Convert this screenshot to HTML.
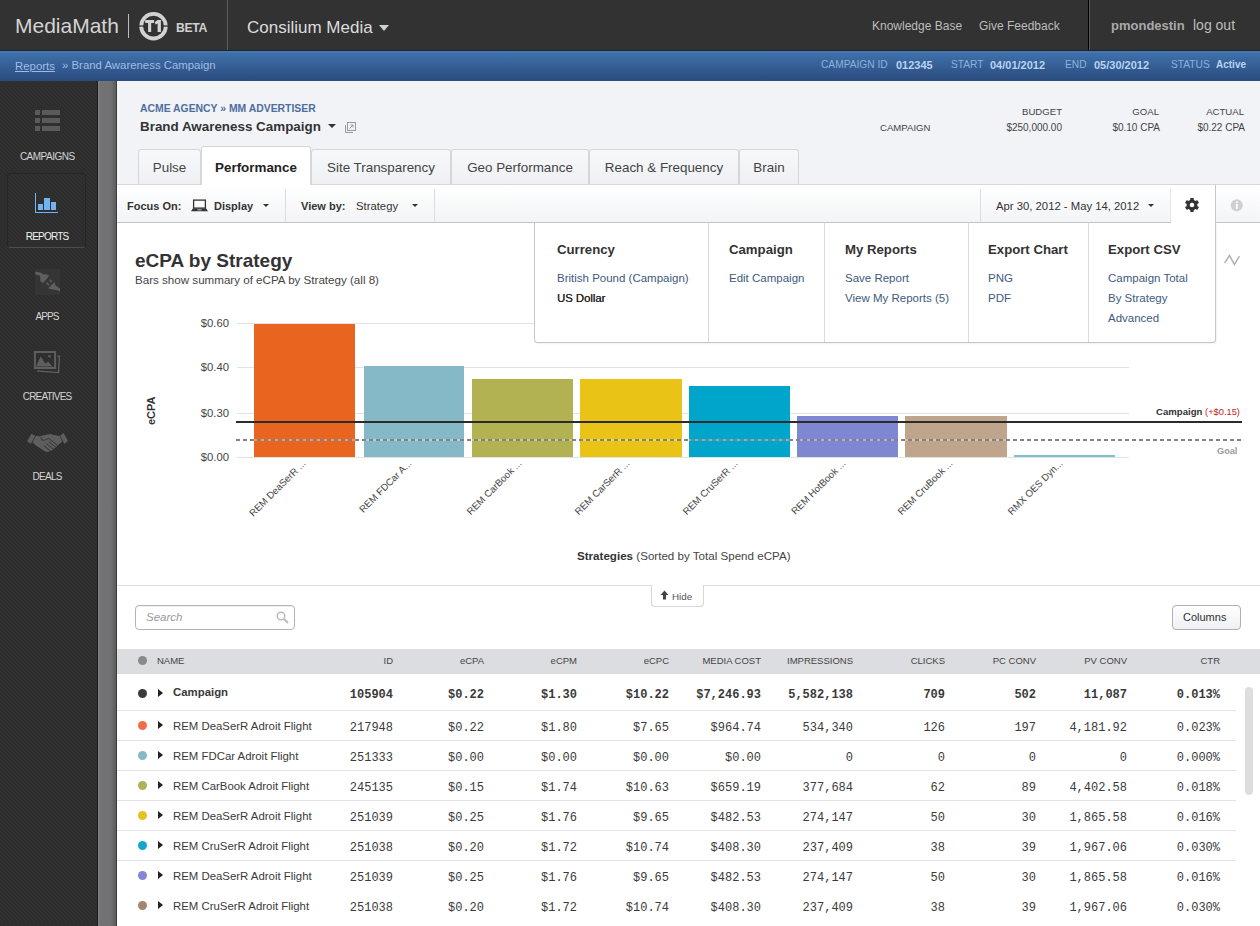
<!DOCTYPE html>
<html><head><meta charset="utf-8">
<style>
*{margin:0;padding:0;box-sizing:border-box}
html,body{width:1260px;height:926px;overflow:hidden;background:#fff;font-family:"Liberation Sans",sans-serif;color:#333}
.a{position:absolute;white-space:nowrap;line-height:1}
.r{text-align:right}
#top{position:absolute;left:0;top:0;width:1260px;height:51px;background:#323232;border-bottom:1px solid #262420}
#blue{position:absolute;left:0;top:51px;width:1260px;height:30px;background:linear-gradient(#4479b9 0 1px,#3f70ab 2px,#2a4b7d)}
#side{position:absolute;left:0;top:81px;width:98px;height:845px;background-color:#303030;background-image:repeating-linear-gradient(45deg,rgba(0,0,0,.13) 0 1px,transparent 1px 2.83px);border-right:1px solid #1c1c1c}
#strip{position:absolute;left:98px;top:81px;width:19px;height:845px;background:linear-gradient(90deg,#7e7e7e 0 1px,#727274 2px,#717173 13px,#5c5c5c 18px,#3c3c3c 18px)}
#hdr{position:absolute;left:117px;top:81px;width:1143px;height:103px;background:#f2f3f7}
.tab{position:absolute;top:149px;height:35px;border:1px solid #d5d6da;border-bottom:none;border-radius:3px 3px 0 0;background:linear-gradient(#f7f8fa,#eef0f3);font-size:13.4px;color:#444;text-align:center;line-height:36px}
.tab.on{top:146px;height:39px;background:#fff;color:#222;font-weight:bold;line-height:42px;z-index:3}
#tb{position:absolute;left:117px;top:184px;width:1143px;height:39px;border-top:1px solid #d5d6da;border-bottom:1px solid #c4c5c9;background:linear-gradient(#fff,#f3f4f7)}
.sep{position:absolute;width:1px;background:#dcdde1}
.lbl{position:absolute;left:0;width:95px;text-align:center;font-size:10px;color:#d4d4d4;line-height:1}
.meta-l{position:absolute;font-size:10.2px;color:#8eb1da;line-height:1;white-space:nowrap}
.meta-v{position:absolute;font-size:11px;font-weight:bold;color:#b9d3f1;line-height:1;white-space:nowrap}
</style></head><body>
<!-- TOP BAR -->
<div id="top">
  <div class="a" style="left:15px;top:15px;font-size:21px;color:#d4d4d4">MediaMath</div>
  <div class="a" style="left:128px;top:14px;width:1px;height:24px;background:#bdbdbd"></div>
  <svg class="a" style="left:138px;top:11px" width="31" height="31" viewBox="0 0 31 31">
    <circle cx="15.5" cy="15.2" r="12.3" fill="none" stroke="#d2d2d2" stroke-width="3.8"/>
    <rect x="0" y="14.4" width="31" height="1.3" fill="#323232"/>
    <path d="M7.2 9 L16.1 9 L16.1 12 L13.2 12 L13.2 21 L10.1 21 L10.1 12 L7.2 12 Z" fill="#d2d2d2"/>
    <path d="M19.5 9 L22.9 9 L22.9 21 L19.6 21 L19.6 12.6 L17.3 13.6 L16.9 11 Z" fill="#d2d2d2"/>
  </svg>
  <div class="a" style="left:176px;top:21.5px;font-size:12.2px;font-weight:bold;color:#d0d0d0;letter-spacing:-0.35px">BETA</div>
  <div class="a" style="left:227px;top:0;width:1px;height:50px;background:#5c5c5c"></div>
  <div class="a" style="left:247px;top:19px;font-size:17px;color:#dcdcdc">Consilium Media</div>
  <div class="a" style="left:378.5px;top:25.2px;width:0;height:0;border-left:5.5px solid transparent;border-right:5.5px solid transparent;border-top:6px solid #d0d0d0"></div>
  <div class="a" style="left:872px;top:20px;font-size:12px;color:#bdbdbd">Knowledge Base</div>
  <div class="a" style="left:979px;top:20px;font-size:12px;color:#bdbdbd">Give Feedback</div>
  <div class="a" style="left:1088px;top:0;width:1px;height:50px;background:#000"></div><div class="a" style="left:1089px;top:0;width:1px;height:50px;background:#5a5a5a"></div>
  <div class="a" style="left:1111px;top:19px;font-size:13px;font-weight:bold;color:#aaaaaa">pmondestin</div>
  <div class="a" style="left:1193px;top:18px;font-size:14px;color:#bdbdbd">log out</div>
</div>
<!-- BLUE BAR -->
<div id="blue">
  <div class="a" style="left:15px;top:9px;font-size:11.4px;color:#9fbde3;text-decoration:underline;line-height:1.1">Reports</div>
  <div class="a" style="left:62px;top:9px;font-size:11.4px;color:#9fbde3">» Brand Awareness Campaign</div>
  <div class="meta-l" style="left:821px;top:9px">CAMPAIGN ID</div>
  <div class="meta-v" style="left:896px;top:9px">012345</div>
  <div class="meta-l" style="left:951px;top:9px">START</div>
  <div class="meta-v" style="left:990px;top:9px">04/01/2012</div>
  <div class="meta-l" style="left:1065px;top:9px">END</div>
  <div class="meta-v" style="left:1094px;top:9px">05/30/2012</div>
  <div class="meta-l" style="left:1171px;top:9px">STATUS</div>
  <div class="meta-v" style="left:1216px;top:9px;font-size:10px">Active</div>
</div>
<!-- SIDEBAR -->
<div id="side">
  <!-- campaigns icon -->
  <div class="a" style="left:35px;top:29px;width:5px;height:5px;background:#5a5a5a"></div>
  <div class="a" style="left:42px;top:29px;width:18px;height:5px;background:#5a5a5a"></div>
  <div class="a" style="left:35px;top:37px;width:5px;height:5px;background:#5a5a5a"></div>
  <div class="a" style="left:42px;top:37px;width:18px;height:5px;background:#5a5a5a"></div>
  <div class="a" style="left:35px;top:45px;width:5px;height:5px;background:#5a5a5a"></div>
  <div class="a" style="left:42px;top:45px;width:18px;height:5px;background:#5a5a5a"></div>
  <div class="lbl" style="top:70.6px;letter-spacing:-0.51px;text-indent:-0.5px">CAMPAIGNS</div>
  <!-- reports box -->
  <div class="a" style="left:7px;top:92px;width:79px;height:75px;border:1px solid #262626;border-bottom:1px solid #4c4c4c;border-radius:4px"></div>
  <div class="a" style="left:35px;top:112px;width:1.2px;height:20px;background:#72b4f2"></div>
  <div class="a" style="left:35px;top:131px;width:23px;height:1.2px;background:#72b4f2"></div>
  <div class="a" style="left:38px;top:123px;width:5px;height:6px;background:#72b4f2"></div>
  <div class="a" style="left:44px;top:117px;width:6px;height:12px;background:#72b4f2"></div>
  <div class="a" style="left:51px;top:121px;width:5px;height:8px;background:#72b4f2"></div>
  <div class="lbl" style="top:150.7px;color:#f2f2f2;letter-spacing:-0.77px;text-indent:-0.77px">REPORTS</div>
  <!-- apps icon -->
  <div class="a" style="left:35px;top:188px;width:25px;height:26px;background:#353535;border-radius:1px"></div>
  <svg class="a" style="left:35px;top:188px" width="26" height="26" viewBox="0 0 26 26">
    <path d="M0.3 2.7 C3.5 2.7 6.5 3.6 8.6 5.4 L6.2 7.6 C4.6 6.2 2.6 5.4 0.3 5.4 Z" fill="#5f5f5f"/>
    <path d="M5.1 6.5 L10.8 4.9 L14.3 6.7 L7.8 14.3 L5.4 11.9 Z" fill="#5f5f5f"/>
    <path d="M14.8 10.8 L16.7 13.2 M11.6 13.8 L14 16.2" stroke="#5f5f5f" stroke-width="1.7"/>
    <path d="M13 19.2 L19.7 13 L20.2 15.9 C22 17.6 23.5 18.6 25.1 19.4 L25.1 22.4 C23.6 21.9 22.3 21.5 21 21.1 L15.7 20 Z" fill="#5f5f5f"/>
  </svg>
  <div class="lbl" style="top:230.6px;letter-spacing:-0.9px;text-indent:-0.9px">APPS</div>
  <!-- creatives icon -->
  <svg class="a" style="left:33px;top:269px" width="29" height="25" viewBox="0 0 29 25">
    <rect x="1.9" y="2" width="20.2" height="16" fill="none" stroke="#5e5e5e" stroke-width="2"/>
    <path d="M3 16.6 L7.6 6.4 L12.3 13.4 L15.3 11.8 L19.5 16.6 Z" fill="#5e5e5e"/>
    <circle cx="16.4" cy="6.3" r="1.3" fill="#5e5e5e"/>
    <path d="M24.3 6.1 L26.4 6.2 L25.5 22.6 L4.1 21" fill="none" stroke="#5e5e5e" stroke-width="1.4"/>
  </svg>
  <div class="lbl" style="top:310.6px;letter-spacing:-0.8px;text-indent:-0.8px">CREATIVES</div>
  <!-- deals icon -->
  <svg class="a" style="left:22px;top:339px" width="50" height="36" viewBox="0 0 50 36">
    <path d="M5.1 21.3 L9.4 13.8 L13.2 15.7 L8.9 23.8 Z" fill="#5e5e5e"/>
    <path d="M38.1 15.7 L41.6 13 L45.9 21.1 L42.4 23.8 Z" fill="#5e5e5e"/>
    <path d="M10.5 22.4 L13.8 15.9 L17.8 16.2 L20.8 15.4 L28.1 14.1 L32.4 15.1 L37.8 15.9 L40.2 21.6 L35.6 25.4 L30.2 30.2 L25.4 31.9 L22.7 31.3 L17.8 28.1 L14.6 25.9 Z" fill="#5e5e5e"/>
    <path d="M19.2 17 C18.6 19.3 20.3 20.8 22.7 20.2 L26.5 18.4 L35.4 25.2 M24.3 23.6 L31.6 29.4 M21.8 25.6 L28.6 31 M26.8 21.8 L33.8 27.2" fill="none" stroke="#303030" stroke-width="0.9"/>
  </svg>
</div>
<div class="lbl" style="top:471.6px;position:absolute;letter-spacing:-0.75px;text-indent:-0.75px">DEALS</div>
<div id="strip"></div>
<!-- HEADER -->
<div id="hdr"></div>
<div class="a" style="left:140px;top:104px;font-size:10.4px;font-weight:bold;color:#4e6e9e">ACME AGENCY » MM ADVERTISER</div>
<div class="a" style="left:140px;top:120px;font-size:13.4px;font-weight:bold;color:#333">Brand Awareness Campaign</div>
<div class="a" style="left:328px;top:124px;width:0;height:0;border-left:4px solid transparent;border-right:4px solid transparent;border-top:4.5px solid #333"></div>
<svg class="a" style="left:344px;top:121px" width="13" height="13" viewBox="0 0 13 13">
  <rect x="3.5" y="1.5" width="8" height="8" fill="none" stroke="#9a9a9a" stroke-width="1"/>
  <path d="M1.5 4 L1.5 11.5 L9 11.5" fill="none" stroke="#9a9a9a" stroke-width="1"/>
  <path d="M5.5 7.5 L9 4 M6.5 4 L9 4 L9 6.5" fill="none" stroke="#9a9a9a" stroke-width="1"/>
</svg>
<div class="a r" style="left:980px;top:107px;width:82px;font-size:9.6px;color:#444">BUDGET</div>
<div class="a" style="left:880px;top:123px;font-size:9.6px;color:#444">CAMPAIGN</div>
<div class="a r" style="left:980px;top:122.7px;width:82px;font-size:10px;color:#444">$250,000.00</div>
<div class="a r" style="left:1080px;top:107px;width:79px;font-size:9.6px;color:#444">GOAL</div>
<div class="a r" style="left:1080px;top:122.7px;width:80px;font-size:10px;color:#444">$0.10 CPA</div>
<div class="a r" style="left:1160px;top:107px;width:84px;font-size:9.6px;color:#444">ACTUAL</div>
<div class="a r" style="left:1160px;top:122.7px;width:85px;font-size:10px;color:#444">$0.22 CPA</div>
<!-- TABS -->
<div class="tab" style="left:138px;width:63px">Pulse</div>
<div class="tab on" style="left:201px;width:110px">Performance</div>
<div class="tab" style="left:311px;width:140px">Site Transparency</div>
<div class="tab" style="left:451px;width:138px">Geo Performance</div>
<div class="tab" style="left:589px;width:150px">Reach &amp; Frequency</div>
<div class="tab" style="left:739px;width:60px">Brain</div>
<!-- TOOLBAR -->
<div id="tb"></div>

<div class="a" style="left:127px;top:201px;font-size:11px;font-weight:bold;color:#333">Focus On:</div>
<svg class="a" style="left:191px;top:199px" width="17" height="13" viewBox="0 0 17 13">
  <rect x="2.6" y="1.1" width="11.8" height="8" fill="none" stroke="#333" stroke-width="1.3"/>
  <path d="M0 12.2 L1.8 9.6 L15.2 9.6 L17 12.2 Z" fill="#333"/>
  <rect x="6.5" y="10.4" width="4" height="0.9" fill="#ddd"/>
</svg>
<div class="a" style="left:214px;top:201px;font-size:11px;font-weight:bold;color:#333">Display</div>
<div class="a" style="left:263px;top:204px;width:0;height:0;border-left:3.5px solid transparent;border-right:3.5px solid transparent;border-top:3.5px solid #333"></div>
<div class="sep" style="left:285px;top:189px;height:33px"></div>
<div class="a" style="left:301px;top:201px;font-size:11px;font-weight:bold;color:#333">View by:</div>
<div class="a" style="left:356px;top:201px;font-size:11.3px;color:#333">Strategy</div>
<div class="a" style="left:412px;top:204px;width:0;height:0;border-left:3.5px solid transparent;border-right:3.5px solid transparent;border-top:3.5px solid #333"></div>
<div class="sep" style="left:434px;top:189px;height:33px"></div>
<div class="sep" style="left:980px;top:189px;height:33px"></div>
<div class="a" style="left:996px;top:201px;font-size:11.3px;color:#333">Apr 30, 2012 - May 14, 2012</div>
<div class="a" style="left:1148px;top:204px;width:0;height:0;border-left:3.5px solid transparent;border-right:3.5px solid transparent;border-top:3.5px solid #333"></div>
<div class="sep" style="left:1170px;top:189px;height:33px;background:#e4e5e8"></div>
<div class="a" style="left:1171px;top:185px;width:45px;height:38px;background:#fff;z-index:2;border-right:1px solid #c6c6c6"></div>
<svg class="a" style="left:1184px;top:197px;z-index:3" width="16" height="16" viewBox="0 0 16 16">
  <g fill="#333">
    <circle cx="8" cy="8" r="5.4"/>
    <rect x="6.3" y="0.9" width="3.4" height="3.4" rx="0.5"/>
    <rect x="6.3" y="0.9" width="3.4" height="3.4" rx="0.5" transform="rotate(60 8 8)"/>
    <rect x="6.3" y="0.9" width="3.4" height="3.4" rx="0.5" transform="rotate(120 8 8)"/>
    <rect x="6.3" y="0.9" width="3.4" height="3.4" rx="0.5" transform="rotate(180 8 8)"/>
    <rect x="6.3" y="0.9" width="3.4" height="3.4" rx="0.5" transform="rotate(240 8 8)"/>
    <rect x="6.3" y="0.9" width="3.4" height="3.4" rx="0.5" transform="rotate(300 8 8)"/>
  </g>
  <circle cx="8" cy="8" r="2.3" fill="#fff"/>
</svg>
<svg class="a" style="left:1230px;top:199px" width="14" height="13" viewBox="0 0 14 13">
  <circle cx="6.8" cy="6.3" r="6" fill="#cfcfcf"/>
  <rect x="5.9" y="5" width="1.8" height="5" fill="#fff"/>
  <circle cx="6.8" cy="3.3" r="1" fill="#fff"/>
</svg>
<!-- CHART -->
<div class="a" style="left:135px;top:251px;font-size:19px;font-weight:bold;color:#333">eCPA by Strategy</div>
<div class="a" style="left:135px;top:274px;font-size:11.6px;color:#444">Bars show summary of eCPA by Strategy (all 8)</div>
<div class="a" style="left:237px;top:323px;width:892px;height:1px;background:#e2e2e2"></div>
<div class="a r" style="left:180px;top:317.5px;width:49px;font-size:11.3px;color:#444">$0.60</div>
<div class="a" style="left:237px;top:367px;width:892px;height:1px;background:#e2e2e2"></div>
<div class="a r" style="left:180px;top:361.5px;width:49px;font-size:11.3px;color:#444">$0.40</div>
<div class="a" style="left:237px;top:413px;width:892px;height:1px;background:#e2e2e2"></div>
<div class="a r" style="left:180px;top:407.5px;width:49px;font-size:11.3px;color:#444">$0.30</div>
<div class="a" style="left:237px;top:457px;width:892px;height:1px;background:#e2e2e2"></div>
<div class="a r" style="left:180px;top:451.5px;width:49px;font-size:11.3px;color:#444">$0.00</div>
<div class="a" style="left:254px;top:324px;width:101px;height:133px;background:#e8641f"></div>
<div class="a" style="left:364px;top:366px;width:100px;height:91px;background:#86b9c8"></div>
<div class="a" style="left:472px;top:379px;width:101px;height:78px;background:#b2b253"></div>
<div class="a" style="left:580px;top:379px;width:102px;height:78px;background:#e9c416"></div>
<div class="a" style="left:689px;top:386px;width:101px;height:71px;background:#00a5cc"></div>
<div class="a" style="left:797px;top:416px;width:101px;height:41px;background:#7f86d2"></div>
<div class="a" style="left:905px;top:416px;width:102px;height:41px;background:#bea58c"></div>
<div class="a" style="left:1014px;top:455px;width:101px;height:2px;background:#7fbfd0"></div>
<div class="a" style="left:236px;top:421px;width:1006px;height:2px;background:#2b2b2b"></div>
<div class="a" style="left:236px;top:439px;width:1007px;height:2px;background:repeating-linear-gradient(90deg,#828282 0 4px,rgba(255,255,255,.35) 4px 7px)"></div>
<div class="a r" style="left:183.9px;top:457px;width:120px;font-size:9.7px;color:#444;transform-origin:100% 50%;transform:rotate(-45deg)">REM DeaSerR ...</div>
<div class="a r" style="left:290.4px;top:457px;width:120px;font-size:9.7px;color:#444;transform-origin:100% 50%;transform:rotate(-45deg)">REM FDCar A...</div>
<div class="a r" style="left:400.4px;top:457px;width:120px;font-size:9.7px;color:#444;transform-origin:100% 50%;transform:rotate(-45deg)">REM CarBook ...</div>
<div class="a r" style="left:508.0px;top:457px;width:120px;font-size:9.7px;color:#444;transform-origin:100% 50%;transform:rotate(-45deg)">REM CarSerR ...</div>
<div class="a r" style="left:616.0px;top:457px;width:120px;font-size:9.7px;color:#444;transform-origin:100% 50%;transform:rotate(-45deg)">REM CruSerR ...</div>
<div class="a r" style="left:724.2px;top:457px;width:120px;font-size:9.7px;color:#444;transform-origin:100% 50%;transform:rotate(-45deg)">REM HotBook ...</div>
<div class="a r" style="left:831.3px;top:457px;width:120px;font-size:9.7px;color:#444;transform-origin:100% 50%;transform:rotate(-45deg)">REM CruBook ...</div>
<div class="a r" style="left:940.7px;top:457px;width:120px;font-size:9.7px;color:#444;transform-origin:100% 50%;transform:rotate(-45deg)">RMX OES Dyn...</div>
<div class="a" style="left:146px;top:425px;font-size:11px;font-weight:bold;color:#333;transform-origin:0 0;transform:rotate(-90deg)">eCPA</div>
<div class="a" style="left:1156px;top:407px;font-size:9.6px;font-weight:bold;color:#333">Campaign <span style="color:#c62222;font-weight:normal;font-size:9.3px">(+$0.15)</span></div>
<div class="a" style="left:1217px;top:447px;font-size:9.2px;font-weight:bold;color:#9a9a9a">Goal</div>
<div class="a" style="left:577px;top:550px;font-size:11.6px;color:#444"><b style="color:#333">Strategies</b> (Sorted by Total Spend eCPA)</div>
<svg class="a" style="left:1222px;top:253px" width="20" height="14" viewBox="0 0 20 14"><path d="M2.7 10.1 L7.4 2.4 L12.4 11.4 L17.4 3.2" fill="none" stroke="#b0b0b0" stroke-width="1.5"/></svg>
<div class="a" style="left:117px;top:585px;width:1143px;height:1px;background:#dedede"></div>
<div class="a" style="left:651px;top:585px;width:53px;height:22px;background:#fff;border:1px solid #d6d6d6;border-top:none;border-radius:0 0 4px 4px"></div>
<svg class="a" style="left:660px;top:590px" width="9" height="10" viewBox="0 0 9 10"><path d="M4.5 0.5 L8.5 5 L6 5 L6 9.5 L3 9.5 L3 5 L0.5 5 Z" fill="#444"/></svg>
<div class="a" style="left:672px;top:592px;font-size:9.8px;color:#555">Hide</div>
<!-- DROPDOWN -->
<div class="a" style="left:534px;top:223px;width:682px;height:120px;background:#fff;border:1px solid #c6c6c6;border-top:none;border-radius:0 0 4px 4px;box-shadow:1px 1px 2px rgba(0,0,0,.06)"></div>
<div class="a" style="left:708px;top:223px;width:1px;height:119px;background:#dadada"></div>
<div class="a" style="left:824px;top:223px;width:1px;height:119px;background:#dadada"></div>
<div class="a" style="left:968px;top:223px;width:1px;height:119px;background:#dadada"></div>
<div class="a" style="left:1088px;top:223px;width:1px;height:119px;background:#dadada"></div>
<div class="a" style="left:557px;top:243px;font-size:13.2px;font-weight:bold;color:#333">Currency</div>
<div class="a" style="left:557px;top:273px;font-size:11.5px;color:#3d5a80">British Pound (Campaign)</div>
<div class="a" style="left:557px;top:293px;font-size:11.3px;color:#2a2a2a;text-shadow:0.2px 0 0 #2a2a2a">US Dollar</div>
<div class="a" style="left:729px;top:243px;font-size:13.2px;font-weight:bold;color:#333">Campaign</div>
<div class="a" style="left:729px;top:273px;font-size:11.5px;color:#3d5a80">Edit Campaign</div>
<div class="a" style="left:845px;top:243px;font-size:13.2px;font-weight:bold;color:#333">My Reports</div>
<div class="a" style="left:845px;top:273px;font-size:11.5px;color:#3d5a80">Save Report</div>
<div class="a" style="left:845px;top:293px;font-size:11.5px;color:#3d5a80">View My Reports (5)</div>
<div class="a" style="left:988px;top:243px;font-size:13.2px;font-weight:bold;color:#333">Export Chart</div>
<div class="a" style="left:988px;top:273px;font-size:11.5px;color:#3d5a80">PNG</div>
<div class="a" style="left:988px;top:293px;font-size:11.5px;color:#3d5a80">PDF</div>
<div class="a" style="left:1108px;top:243px;font-size:13.2px;font-weight:bold;color:#333">Export CSV</div>
<div class="a" style="left:1108px;top:273px;font-size:11.5px;color:#3d5a80">Campaign Total</div>
<div class="a" style="left:1108px;top:293px;font-size:11.5px;color:#3d5a80">By Strategy</div>
<div class="a" style="left:1108px;top:313px;font-size:11.5px;color:#3d5a80">Advanced</div>
<!--TABLE-->
<div class="a" style="left:135px;top:605px;width:160px;height:25px;border:1px solid #b4b4b4;border-radius:4px;background:#fff;box-shadow:inset 0 1px 1px rgba(0,0,0,.06)"></div>
<div class="a" style="left:146px;top:612px;font-size:11.5px;font-style:italic;color:#999">Search</div>
<svg class="a" style="left:276px;top:611px" width="13" height="13" viewBox="0 0 13 13"><circle cx="5" cy="5" r="3.8" fill="none" stroke="#bbb" stroke-width="1.4"/><path d="M7.8 7.8 L12 12" stroke="#bbb" stroke-width="2"/></svg>
<div class="a" style="left:1172px;top:605px;width:69px;height:25px;border:1px solid #b0b0b0;border-radius:4px;background:linear-gradient(#fff,#eef0f4)"></div>
<div class="a" style="left:1183px;top:612px;font-size:11px;color:#333">Columns</div>
<div class="a" style="left:117px;top:649px;width:1143px;height:24.5px;background:#dcdde1"></div>
<div class="a" style="left:138px;top:656px;width:9px;height:9px;border-radius:50%;background:#8a8a8a"></div>
<div class="a" style="left:157px;top:656px;font-size:9.5px;color:#444">NAME</div>
<div class="a r" style="left:293px;top:656px;width:100px;font-size:9.5px;color:#444">ID</div>
<div class="a r" style="left:384px;top:656px;width:100px;font-size:9.5px;color:#444">eCPA</div>
<div class="a r" style="left:477px;top:656px;width:100px;font-size:9.5px;color:#444">eCPM</div>
<div class="a r" style="left:569px;top:656px;width:100px;font-size:9.5px;color:#444">eCPC</div>
<div class="a r" style="left:661px;top:656px;width:100px;font-size:9.5px;color:#444">MEDIA COST</div>
<div class="a r" style="left:753px;top:656px;width:100px;font-size:9.5px;color:#444">IMPRESSIONS</div>
<div class="a r" style="left:845px;top:656px;width:100px;font-size:9.5px;color:#444">CLICKS</div>
<div class="a r" style="left:936px;top:656px;width:100px;font-size:9.5px;color:#444">PC CONV</div>
<div class="a r" style="left:1027px;top:656px;width:100px;font-size:9.5px;color:#444">PV CONV</div>
<div class="a r" style="left:1120px;top:656px;width:100px;font-size:9.5px;color:#444">CTR</div>
<!--ROWS-->
<div class="a" style="left:117px;top:710px;width:1119px;height:1px;background:#e3e3e3"></div>
<div class="a" style="left:138px;top:688.7px;width:9px;height:9px;border-radius:50%;background:#3a3a3a"></div>
<div class="a" style="left:158px;top:688.7px;width:0;height:0;border-top:4.5px solid transparent;border-bottom:4.5px solid transparent;border-left:5px solid #222"></div>
<div class="a" style="left:173px;top:687.2px;font-size:11.4px;font-weight:bold;color:#3a3a3a">Campaign</div>
<div class="a r" style="left:273px;top:688.7px;width:120px;font-family:'Liberation Mono',monospace;font-size:12px;font-weight:bold;color:#3a3a3a">105904</div>
<div class="a r" style="left:364px;top:688.7px;width:120px;font-family:'Liberation Mono',monospace;font-size:12px;font-weight:bold;color:#3a3a3a">$0.22</div>
<div class="a r" style="left:457px;top:688.7px;width:120px;font-family:'Liberation Mono',monospace;font-size:12px;font-weight:bold;color:#3a3a3a">$1.30</div>
<div class="a r" style="left:549px;top:688.7px;width:120px;font-family:'Liberation Mono',monospace;font-size:12px;font-weight:bold;color:#3a3a3a">$10.22</div>
<div class="a r" style="left:641px;top:688.7px;width:120px;font-family:'Liberation Mono',monospace;font-size:12px;font-weight:bold;color:#3a3a3a">$7,246.93</div>
<div class="a r" style="left:733px;top:688.7px;width:120px;font-family:'Liberation Mono',monospace;font-size:12px;font-weight:bold;color:#3a3a3a">5,582,138</div>
<div class="a r" style="left:825px;top:688.7px;width:120px;font-family:'Liberation Mono',monospace;font-size:12px;font-weight:bold;color:#3a3a3a">709</div>
<div class="a r" style="left:916px;top:688.7px;width:120px;font-family:'Liberation Mono',monospace;font-size:12px;font-weight:bold;color:#3a3a3a">502</div>
<div class="a r" style="left:1007px;top:688.7px;width:120px;font-family:'Liberation Mono',monospace;font-size:12px;font-weight:bold;color:#3a3a3a">11,087</div>
<div class="a r" style="left:1100px;top:688.7px;width:120px;font-family:'Liberation Mono',monospace;font-size:12px;font-weight:bold;color:#3a3a3a">0.013%</div>
<div class="a" style="left:117px;top:740px;width:1119px;height:1px;background:#e3e3e3"></div>
<div class="a" style="left:138px;top:720.8px;width:9px;height:9px;border-radius:50%;background:#ef7048"></div>
<div class="a" style="left:158px;top:720.8px;width:0;height:0;border-top:4.5px solid transparent;border-bottom:4.5px solid transparent;border-left:5px solid #222"></div>
<div class="a" style="left:173px;top:721.1px;font-size:11.4px;font-weight:normal;color:#3a3a3a">REM DeaSerR Adroit Flight</div>
<div class="a r" style="left:273px;top:721.8px;width:120px;font-family:'Liberation Mono',monospace;font-size:12px;font-weight:normal;color:#3a3a3a">217948</div>
<div class="a r" style="left:364px;top:721.8px;width:120px;font-family:'Liberation Mono',monospace;font-size:12px;font-weight:normal;color:#3a3a3a">$0.22</div>
<div class="a r" style="left:457px;top:721.8px;width:120px;font-family:'Liberation Mono',monospace;font-size:12px;font-weight:normal;color:#3a3a3a">$1.80</div>
<div class="a r" style="left:549px;top:721.8px;width:120px;font-family:'Liberation Mono',monospace;font-size:12px;font-weight:normal;color:#3a3a3a">$7.65</div>
<div class="a r" style="left:641px;top:721.8px;width:120px;font-family:'Liberation Mono',monospace;font-size:12px;font-weight:normal;color:#3a3a3a">$964.74</div>
<div class="a r" style="left:733px;top:721.8px;width:120px;font-family:'Liberation Mono',monospace;font-size:12px;font-weight:normal;color:#3a3a3a">534,340</div>
<div class="a r" style="left:825px;top:721.8px;width:120px;font-family:'Liberation Mono',monospace;font-size:12px;font-weight:normal;color:#3a3a3a">126</div>
<div class="a r" style="left:916px;top:721.8px;width:120px;font-family:'Liberation Mono',monospace;font-size:12px;font-weight:normal;color:#3a3a3a">197</div>
<div class="a r" style="left:1007px;top:721.8px;width:120px;font-family:'Liberation Mono',monospace;font-size:12px;font-weight:normal;color:#3a3a3a">4,181.92</div>
<div class="a r" style="left:1100px;top:721.8px;width:120px;font-family:'Liberation Mono',monospace;font-size:12px;font-weight:normal;color:#3a3a3a">0.023%</div>
<div class="a" style="left:117px;top:770px;width:1119px;height:1px;background:#e3e3e3"></div>
<div class="a" style="left:138px;top:750.8px;width:9px;height:9px;border-radius:50%;background:#86b9c8"></div>
<div class="a" style="left:158px;top:750.8px;width:0;height:0;border-top:4.5px solid transparent;border-bottom:4.5px solid transparent;border-left:5px solid #222"></div>
<div class="a" style="left:173px;top:751.1px;font-size:11.4px;font-weight:normal;color:#3a3a3a">REM FDCar Adroit Flight</div>
<div class="a r" style="left:273px;top:751.8px;width:120px;font-family:'Liberation Mono',monospace;font-size:12px;font-weight:normal;color:#3a3a3a">251333</div>
<div class="a r" style="left:364px;top:751.8px;width:120px;font-family:'Liberation Mono',monospace;font-size:12px;font-weight:normal;color:#3a3a3a">$0.00</div>
<div class="a r" style="left:457px;top:751.8px;width:120px;font-family:'Liberation Mono',monospace;font-size:12px;font-weight:normal;color:#3a3a3a">$0.00</div>
<div class="a r" style="left:549px;top:751.8px;width:120px;font-family:'Liberation Mono',monospace;font-size:12px;font-weight:normal;color:#3a3a3a">$0.00</div>
<div class="a r" style="left:641px;top:751.8px;width:120px;font-family:'Liberation Mono',monospace;font-size:12px;font-weight:normal;color:#3a3a3a">$0.00</div>
<div class="a r" style="left:733px;top:751.8px;width:120px;font-family:'Liberation Mono',monospace;font-size:12px;font-weight:normal;color:#3a3a3a">0</div>
<div class="a r" style="left:825px;top:751.8px;width:120px;font-family:'Liberation Mono',monospace;font-size:12px;font-weight:normal;color:#3a3a3a">0</div>
<div class="a r" style="left:916px;top:751.8px;width:120px;font-family:'Liberation Mono',monospace;font-size:12px;font-weight:normal;color:#3a3a3a">0</div>
<div class="a r" style="left:1007px;top:751.8px;width:120px;font-family:'Liberation Mono',monospace;font-size:12px;font-weight:normal;color:#3a3a3a">0</div>
<div class="a r" style="left:1100px;top:751.8px;width:120px;font-family:'Liberation Mono',monospace;font-size:12px;font-weight:normal;color:#3a3a3a">0.000%</div>
<div class="a" style="left:117px;top:800px;width:1119px;height:1px;background:#e3e3e3"></div>
<div class="a" style="left:138px;top:780.8px;width:9px;height:9px;border-radius:50%;background:#b0b05a"></div>
<div class="a" style="left:158px;top:780.8px;width:0;height:0;border-top:4.5px solid transparent;border-bottom:4.5px solid transparent;border-left:5px solid #222"></div>
<div class="a" style="left:173px;top:781.1px;font-size:11.4px;font-weight:normal;color:#3a3a3a">REM CarBook Adroit Flight</div>
<div class="a r" style="left:273px;top:781.8px;width:120px;font-family:'Liberation Mono',monospace;font-size:12px;font-weight:normal;color:#3a3a3a">245135</div>
<div class="a r" style="left:364px;top:781.8px;width:120px;font-family:'Liberation Mono',monospace;font-size:12px;font-weight:normal;color:#3a3a3a">$0.15</div>
<div class="a r" style="left:457px;top:781.8px;width:120px;font-family:'Liberation Mono',monospace;font-size:12px;font-weight:normal;color:#3a3a3a">$1.74</div>
<div class="a r" style="left:549px;top:781.8px;width:120px;font-family:'Liberation Mono',monospace;font-size:12px;font-weight:normal;color:#3a3a3a">$10.63</div>
<div class="a r" style="left:641px;top:781.8px;width:120px;font-family:'Liberation Mono',monospace;font-size:12px;font-weight:normal;color:#3a3a3a">$659.19</div>
<div class="a r" style="left:733px;top:781.8px;width:120px;font-family:'Liberation Mono',monospace;font-size:12px;font-weight:normal;color:#3a3a3a">377,684</div>
<div class="a r" style="left:825px;top:781.8px;width:120px;font-family:'Liberation Mono',monospace;font-size:12px;font-weight:normal;color:#3a3a3a">62</div>
<div class="a r" style="left:916px;top:781.8px;width:120px;font-family:'Liberation Mono',monospace;font-size:12px;font-weight:normal;color:#3a3a3a">89</div>
<div class="a r" style="left:1007px;top:781.8px;width:120px;font-family:'Liberation Mono',monospace;font-size:12px;font-weight:normal;color:#3a3a3a">4,402.58</div>
<div class="a r" style="left:1100px;top:781.8px;width:120px;font-family:'Liberation Mono',monospace;font-size:12px;font-weight:normal;color:#3a3a3a">0.018%</div>
<div class="a" style="left:117px;top:830px;width:1119px;height:1px;background:#e3e3e3"></div>
<div class="a" style="left:138px;top:810.8px;width:9px;height:9px;border-radius:50%;background:#e6c21f"></div>
<div class="a" style="left:158px;top:810.8px;width:0;height:0;border-top:4.5px solid transparent;border-bottom:4.5px solid transparent;border-left:5px solid #222"></div>
<div class="a" style="left:173px;top:811.1px;font-size:11.4px;font-weight:normal;color:#3a3a3a">REM DeaSerR Adroit Flight</div>
<div class="a r" style="left:273px;top:811.8px;width:120px;font-family:'Liberation Mono',monospace;font-size:12px;font-weight:normal;color:#3a3a3a">251039</div>
<div class="a r" style="left:364px;top:811.8px;width:120px;font-family:'Liberation Mono',monospace;font-size:12px;font-weight:normal;color:#3a3a3a">$0.25</div>
<div class="a r" style="left:457px;top:811.8px;width:120px;font-family:'Liberation Mono',monospace;font-size:12px;font-weight:normal;color:#3a3a3a">$1.76</div>
<div class="a r" style="left:549px;top:811.8px;width:120px;font-family:'Liberation Mono',monospace;font-size:12px;font-weight:normal;color:#3a3a3a">$9.65</div>
<div class="a r" style="left:641px;top:811.8px;width:120px;font-family:'Liberation Mono',monospace;font-size:12px;font-weight:normal;color:#3a3a3a">$482.53</div>
<div class="a r" style="left:733px;top:811.8px;width:120px;font-family:'Liberation Mono',monospace;font-size:12px;font-weight:normal;color:#3a3a3a">274,147</div>
<div class="a r" style="left:825px;top:811.8px;width:120px;font-family:'Liberation Mono',monospace;font-size:12px;font-weight:normal;color:#3a3a3a">50</div>
<div class="a r" style="left:916px;top:811.8px;width:120px;font-family:'Liberation Mono',monospace;font-size:12px;font-weight:normal;color:#3a3a3a">30</div>
<div class="a r" style="left:1007px;top:811.8px;width:120px;font-family:'Liberation Mono',monospace;font-size:12px;font-weight:normal;color:#3a3a3a">1,865.58</div>
<div class="a r" style="left:1100px;top:811.8px;width:120px;font-family:'Liberation Mono',monospace;font-size:12px;font-weight:normal;color:#3a3a3a">0.016%</div>
<div class="a" style="left:117px;top:860px;width:1119px;height:1px;background:#e3e3e3"></div>
<div class="a" style="left:138px;top:840.8px;width:9px;height:9px;border-radius:50%;background:#16a6cc"></div>
<div class="a" style="left:158px;top:840.8px;width:0;height:0;border-top:4.5px solid transparent;border-bottom:4.5px solid transparent;border-left:5px solid #222"></div>
<div class="a" style="left:173px;top:841.1px;font-size:11.4px;font-weight:normal;color:#3a3a3a">REM CruSerR Adroit Flight</div>
<div class="a r" style="left:273px;top:841.8px;width:120px;font-family:'Liberation Mono',monospace;font-size:12px;font-weight:normal;color:#3a3a3a">251038</div>
<div class="a r" style="left:364px;top:841.8px;width:120px;font-family:'Liberation Mono',monospace;font-size:12px;font-weight:normal;color:#3a3a3a">$0.20</div>
<div class="a r" style="left:457px;top:841.8px;width:120px;font-family:'Liberation Mono',monospace;font-size:12px;font-weight:normal;color:#3a3a3a">$1.72</div>
<div class="a r" style="left:549px;top:841.8px;width:120px;font-family:'Liberation Mono',monospace;font-size:12px;font-weight:normal;color:#3a3a3a">$10.74</div>
<div class="a r" style="left:641px;top:841.8px;width:120px;font-family:'Liberation Mono',monospace;font-size:12px;font-weight:normal;color:#3a3a3a">$408.30</div>
<div class="a r" style="left:733px;top:841.8px;width:120px;font-family:'Liberation Mono',monospace;font-size:12px;font-weight:normal;color:#3a3a3a">237,409</div>
<div class="a r" style="left:825px;top:841.8px;width:120px;font-family:'Liberation Mono',monospace;font-size:12px;font-weight:normal;color:#3a3a3a">38</div>
<div class="a r" style="left:916px;top:841.8px;width:120px;font-family:'Liberation Mono',monospace;font-size:12px;font-weight:normal;color:#3a3a3a">39</div>
<div class="a r" style="left:1007px;top:841.8px;width:120px;font-family:'Liberation Mono',monospace;font-size:12px;font-weight:normal;color:#3a3a3a">1,967.06</div>
<div class="a r" style="left:1100px;top:841.8px;width:120px;font-family:'Liberation Mono',monospace;font-size:12px;font-weight:normal;color:#3a3a3a">0.030%</div>
<div class="a" style="left:138px;top:870.8px;width:9px;height:9px;border-radius:50%;background:#8686d6"></div>
<div class="a" style="left:158px;top:870.8px;width:0;height:0;border-top:4.5px solid transparent;border-bottom:4.5px solid transparent;border-left:5px solid #222"></div>
<div class="a" style="left:173px;top:871.1px;font-size:11.4px;font-weight:normal;color:#3a3a3a">REM DeaSerR Adroit Flight</div>
<div class="a r" style="left:273px;top:871.8px;width:120px;font-family:'Liberation Mono',monospace;font-size:12px;font-weight:normal;color:#3a3a3a">251039</div>
<div class="a r" style="left:364px;top:871.8px;width:120px;font-family:'Liberation Mono',monospace;font-size:12px;font-weight:normal;color:#3a3a3a">$0.25</div>
<div class="a r" style="left:457px;top:871.8px;width:120px;font-family:'Liberation Mono',monospace;font-size:12px;font-weight:normal;color:#3a3a3a">$1.76</div>
<div class="a r" style="left:549px;top:871.8px;width:120px;font-family:'Liberation Mono',monospace;font-size:12px;font-weight:normal;color:#3a3a3a">$9.65</div>
<div class="a r" style="left:641px;top:871.8px;width:120px;font-family:'Liberation Mono',monospace;font-size:12px;font-weight:normal;color:#3a3a3a">$482.53</div>
<div class="a r" style="left:733px;top:871.8px;width:120px;font-family:'Liberation Mono',monospace;font-size:12px;font-weight:normal;color:#3a3a3a">274,147</div>
<div class="a r" style="left:825px;top:871.8px;width:120px;font-family:'Liberation Mono',monospace;font-size:12px;font-weight:normal;color:#3a3a3a">50</div>
<div class="a r" style="left:916px;top:871.8px;width:120px;font-family:'Liberation Mono',monospace;font-size:12px;font-weight:normal;color:#3a3a3a">30</div>
<div class="a r" style="left:1007px;top:871.8px;width:120px;font-family:'Liberation Mono',monospace;font-size:12px;font-weight:normal;color:#3a3a3a">1,865.58</div>
<div class="a r" style="left:1100px;top:871.8px;width:120px;font-family:'Liberation Mono',monospace;font-size:12px;font-weight:normal;color:#3a3a3a">0.016%</div>
<div class="a" style="left:138px;top:900.8px;width:9px;height:9px;border-radius:50%;background:#a4856f"></div>
<div class="a" style="left:158px;top:900.8px;width:0;height:0;border-top:4.5px solid transparent;border-bottom:4.5px solid transparent;border-left:5px solid #222"></div>
<div class="a" style="left:173px;top:901.1px;font-size:11.4px;font-weight:normal;color:#3a3a3a">REM CruSerR Adroit Flight</div>
<div class="a r" style="left:273px;top:901.8px;width:120px;font-family:'Liberation Mono',monospace;font-size:12px;font-weight:normal;color:#3a3a3a">251038</div>
<div class="a r" style="left:364px;top:901.8px;width:120px;font-family:'Liberation Mono',monospace;font-size:12px;font-weight:normal;color:#3a3a3a">$0.20</div>
<div class="a r" style="left:457px;top:901.8px;width:120px;font-family:'Liberation Mono',monospace;font-size:12px;font-weight:normal;color:#3a3a3a">$1.72</div>
<div class="a r" style="left:549px;top:901.8px;width:120px;font-family:'Liberation Mono',monospace;font-size:12px;font-weight:normal;color:#3a3a3a">$10.74</div>
<div class="a r" style="left:641px;top:901.8px;width:120px;font-family:'Liberation Mono',monospace;font-size:12px;font-weight:normal;color:#3a3a3a">$408.30</div>
<div class="a r" style="left:733px;top:901.8px;width:120px;font-family:'Liberation Mono',monospace;font-size:12px;font-weight:normal;color:#3a3a3a">237,409</div>
<div class="a r" style="left:825px;top:901.8px;width:120px;font-family:'Liberation Mono',monospace;font-size:12px;font-weight:normal;color:#3a3a3a">38</div>
<div class="a r" style="left:916px;top:901.8px;width:120px;font-family:'Liberation Mono',monospace;font-size:12px;font-weight:normal;color:#3a3a3a">39</div>
<div class="a r" style="left:1007px;top:901.8px;width:120px;font-family:'Liberation Mono',monospace;font-size:12px;font-weight:normal;color:#3a3a3a">1,967.06</div>
<div class="a r" style="left:1100px;top:901.8px;width:120px;font-family:'Liberation Mono',monospace;font-size:12px;font-weight:normal;color:#3a3a3a">0.030%</div>
<!--/ROWS-->
<div class="a" style="left:1245px;top:687px;width:8px;height:108px;border-radius:4px;background:#dedede"></div>
</body></html>
